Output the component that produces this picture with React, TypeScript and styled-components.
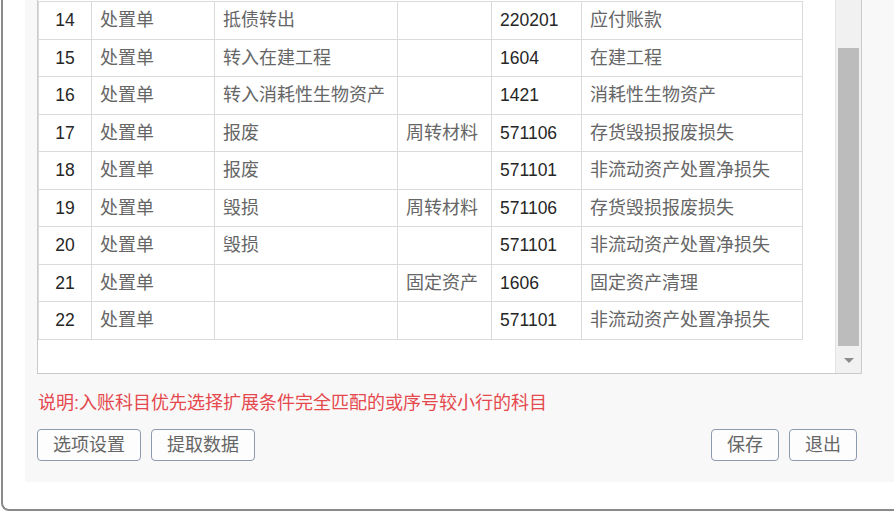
import React from "react";
import styled, { createGlobalStyle } from "styled-components";

const GlobalStyle = createGlobalStyle`
  html, body { margin: 0; padding: 0; background: #ffffff; overflow: hidden; }
  body { font-family: "Liberation Sans", "Noto Sans CJK SC", sans-serif; }
`;

const Frame = styled.div`
  margin-left: 1px;
  height: 509px;
  border-left: 2px solid #8a8a8a;
  border-bottom: 2px solid #8a8a8a;
  border-bottom-left-radius: 8px;
  background: #ffffff;
  padding-left: 22px;
  box-sizing: content-box;
`;

const Panel = styled.div`
  height: 482px;
  background: #f8f8f8;
  padding-left: 12px;
  box-sizing: border-box;
  display: flex;
  flex-direction: column;
`;

const Content = styled.div`
  width: 825px;
  display: flex;
  flex-direction: column;
`;

const TableBox = styled.div`
  height: 374px;
  box-sizing: border-box;
  border: 1px solid #cacaca;
  border-top: none;
  background: #ffffff;
  display: flex;
`;

const TableArea = styled.div`
  flex: 1;
  overflow: hidden;
`;

const Table = styled.table`
  border-collapse: collapse;
  table-layout: fixed;
  width: 764px;
  margin-top: 1px;
`;

const Row = styled.tr`
  height: 37.5px;
`;

const Cell = styled.td<{ $num?: boolean; $center?: boolean }>`
  border: 1px solid #dadada;
  padding: 0 0 0 ${(p) => (p.$center ? 0 : 8)}px;
  text-align: ${(p) => (p.$center ? "center" : "left")};
  color: ${(p) => (p.$num ? "#262626" : "#666666")};
  font-family: "Liberation Sans", "Noto Sans CJK SC", sans-serif;
  font-size: ${(p) => (p.$num ? 17.5 : 18)}px;
  white-space: nowrap;
  overflow: hidden;
  vertical-align: middle;
  line-height: 20px;
`;

const Scrollbar = styled.div`
  width: 26px;
  box-sizing: border-box;
  background: #f1f1f1;
  border-left: 1px solid #e4e4e4;
  display: flex;
  flex-direction: column;
  padding: 48px 2px 0 2px;
`;

const Thumb = styled.div`
  height: 298px;
  background: #bcbcbc;
`;

const ArrowBox = styled.div`
  flex: 1;
  display: flex;
  align-items: center;
  justify-content: center;
`;

const Arrow = styled.div`
  width: 0;
  height: 0;
  border-left: 5px solid transparent;
  border-right: 5px solid transparent;
  border-top: 5px solid #8c8c8c;
  margin-top: 2px;
`;

const Note = styled.div`
  margin-top: 19px;
  padding-left: 1px;
  font-family: "Liberation Sans", "Noto Sans CJK SC", sans-serif;
  font-size: 18px;
  line-height: 20px;
  color: #e5484d;
`;

const ButtonRow = styled.div`
  margin-top: 16px;
  padding-right: 5px;
  display: flex;
  gap: 10px;
`;

const Spacer = styled.div`
  flex: 1;
`;

const Button = styled.button<{ $w: number }>`
  width: ${(p) => p.$w}px;
  height: 32px;
  box-sizing: border-box;
  border: 1px solid #8e9aae;
  border-radius: 4px;
  background: #fdfdfd;
  color: #666666;
  font-family: "Liberation Sans", "Noto Sans CJK SC", sans-serif;
  font-size: 18px;
  padding: 0;
  line-height: 1;
`;

type R = [string, string, string, string, string, string];

const rows: R[] = [
  ["14", "处置单", "抵债转出", "", "220201", "应付账款"],
  ["15", "处置单", "转入在建工程", "", "1604", "在建工程"],
  ["16", "处置单", "转入消耗性生物资产", "", "1421", "消耗性生物资产"],
  ["17", "处置单", "报废", "周转材料", "571106", "存货毁损报废损失"],
  ["18", "处置单", "报废", "", "571101", "非流动资产处置净损失"],
  ["19", "处置单", "毁损", "周转材料", "571106", "存货毁损报废损失"],
  ["20", "处置单", "毁损", "", "571101", "非流动资产处置净损失"],
  ["21", "处置单", "", "固定资产", "1606", "固定资产清理"],
  ["22", "处置单", "", "", "571101", "非流动资产处置净损失"],
];

const widths = [53, 123, 183, 94, 90, 221];

export default function App() {
  return (
    <>
      <GlobalStyle />
      <Frame>
        <Panel>
          <Content>
            <TableBox>
              <TableArea>
                <Table>
                  <colgroup>
                    {widths.map((w, i) => (
                      <col key={i} style={{ width: w }} />
                    ))}
                  </colgroup>
                  <tbody>
                    {rows.map((r) => (
                      <Row key={r[0]}>
                        <Cell $num $center>{r[0]}</Cell>
                        <Cell>{r[1]}</Cell>
                        <Cell>{r[2]}</Cell>
                        <Cell>{r[3]}</Cell>
                        <Cell $num>{r[4]}</Cell>
                        <Cell>{r[5]}</Cell>
                      </Row>
                    ))}
                  </tbody>
                </Table>
              </TableArea>
              <Scrollbar>
                <Thumb />
                <ArrowBox>
                  <Arrow />
                </ArrowBox>
              </Scrollbar>
            </TableBox>
            <Note>说明:入账科目优先选择扩展条件完全匹配的或序号较小行的科目</Note>
            <ButtonRow>
              <Button $w={104}>选项设置</Button>
              <Button $w={104}>提取数据</Button>
              <Spacer />
              <Button $w={68}>保存</Button>
              <Button $w={68}>退出</Button>
            </ButtonRow>
          </Content>
        </Panel>
      </Frame>
    </>
  );
}
